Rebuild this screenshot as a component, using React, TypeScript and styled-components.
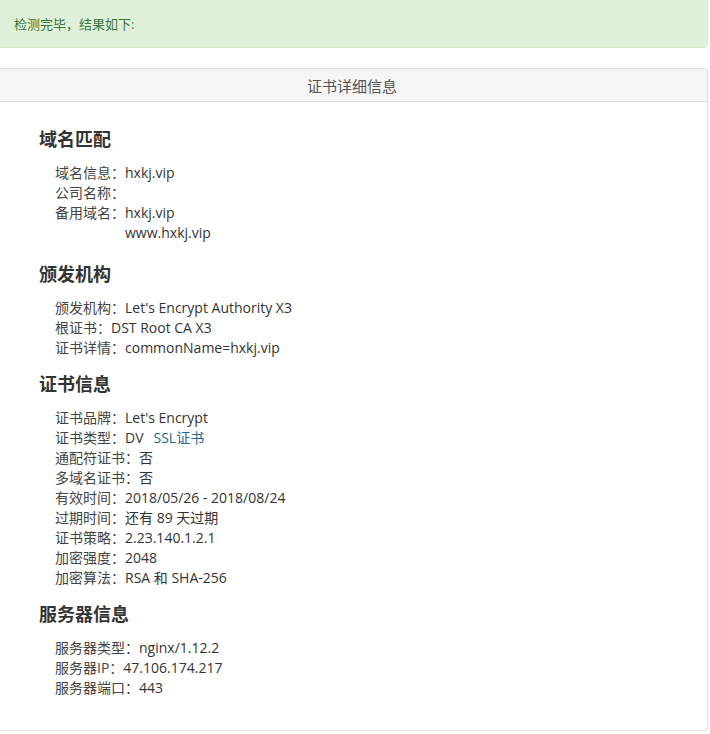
import React from "react";
import styled, { createGlobalStyle } from "styled-components";

const GlobalStyle = createGlobalStyle`
  body {
    margin: 0;
    background: #fff;
    font-family: "Open Sans", "Noto Sans CJK SC", sans-serif;
    color: #333;
  }
`;

const Page = styled.div`
  margin: -4px 0 0 -6px;
  width: 714px;
`;

const Alert = styled.div`
  background: #dff0d8;
  border: 1px solid #d6e9c6;
  border-radius: 4px;
  color: #3c763d;
  font-size: 13px;
  height: 52px;
  box-sizing: border-box;
  padding: 3px 0 0 19px;
  display: flex;
  align-items: center;
  margin-bottom: 20px;
`;

const Panel = styled.div`
  border: 1px solid #ddd;
  border-radius: 4px;
  box-shadow: 0 1px 1px rgba(0, 0, 0, 0.12);
  background: #fff;
`;

const PanelHeading = styled.div`
  background: #f5f5f5;
  border-bottom: 1px solid #ddd;
  border-radius: 3px 3px 0 0;
  height: 32px;
  display: flex;
  align-items: center;
  justify-content: center;
  font-size: 15px;
  color: #555;
  padding-left: 2px;
`;

const PanelBody = styled.div`
  padding: 25px 0 32px 44px;
`;

const Section = styled.div<{ $gap?: number }>`
  margin-top: ${(p) => p.$gap ?? 14}px;
  &:first-child {
    margin-top: 0;
  }
`;

const SectionTitle = styled.h4`
  margin: 0 0 12px;
  font-size: 18px;
  line-height: 24px;
  font-weight: bold;
  color: #333;
`;

const Rows = styled.div`
  padding-left: 16px;
  font-size: 14px;
  line-height: 20px;
`;

const Row = styled.div`
  display: flex;
  align-items: flex-start;
`;

const Label = styled.span`
  color: #444;
  white-space: nowrap;
`;

const Value = styled.span`
  color: #333;
  display: flex;
  flex-direction: column;
`;

const Link = styled.a`
  color: #1b6a92;
  text-decoration: none;
  margin-left: 10px;
`;

type Item = { label: string; value: React.ReactNode };

const sections: { title: string; gap?: number; items: Item[] }[] = [
  {
    title: "域名匹配",
    items: [
      { label: "域名信息：", value: "hxkj.vip" },
      { label: "公司名称：", value: "" },
      {
        label: "备用域名：",
        value: (
          <>
            <span>hxkj.vip</span>
            <span>www.hxkj.vip</span>
          </>
        ),
      },
    ],
  },
  {
    title: "颁发机构",
    gap: 19,
    items: [
      { label: "颁发机构：", value: "Let's Encrypt Authority X3" },
      { label: "根证书：", value: "DST Root CA X3" },
      { label: "证书详情：", value: "commonName=hxkj.vip" },
    ],
  },
  {
    title: "证书信息",
    items: [
      { label: "证书品牌：", value: "Let's Encrypt" },
      {
        label: "证书类型：",
        value: (
          <span>
            DV<Link href="#">SSL证书</Link>
          </span>
        ),
      },
      { label: "通配符证书：", value: "否" },
      { label: "多域名证书：", value: "否" },
      { label: "有效时间：", value: "2018/05/26 - 2018/08/24" },
      { label: "过期时间：", value: "还有 89 天过期" },
      { label: "证书策略：", value: "2.23.140.1.2.1" },
      { label: "加密强度：", value: "2048" },
      { label: "加密算法：", value: "RSA 和 SHA-256" },
    ],
  },
  {
    title: "服务器信息",
    items: [
      { label: "服务器类型：", value: "nginx/1.12.2" },
      { label: "服务器IP：", value: "47.106.174.217" },
      { label: "服务器端口：", value: "443" },
    ],
  },
];

const App = () => {
  return (
    <Page>
      <GlobalStyle />
      <Alert>检测完毕，结果如下:</Alert>
      <Panel>
        <PanelHeading>证书详细信息</PanelHeading>
        <PanelBody>
          {sections.map((s) => (
            <Section key={s.title} $gap={s.gap}>
              <SectionTitle>{s.title}</SectionTitle>
              <Rows>
                {s.items.map((it) => (
                  <Row key={it.label}>
                    <Label>{it.label}</Label>
                    <Value>{it.value}</Value>
                  </Row>
                ))}
              </Rows>
            </Section>
          ))}
        </PanelBody>
      </Panel>
    </Page>
  );
};

export default App;
